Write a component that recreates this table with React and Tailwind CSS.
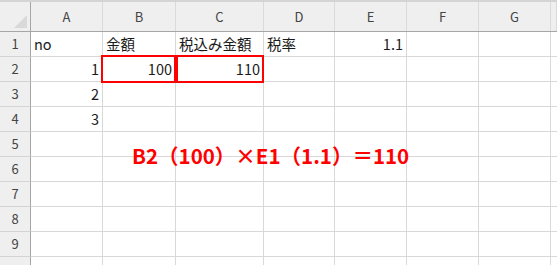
const cols = ['A', 'B', 'C', 'D', 'E', 'F', 'G', ''];
const widths = ['w-[72px]', 'w-[73px]', 'w-[88px]', 'w-[71px]', 'w-[72px]', 'w-[72px]', 'w-[72px]', 'flex-1'];

// cell values per row, [text, align]
const rows = [
  [['no', 'l'], ['金額', 'l'], ['税込み金額', 'l'], ['税率', 'l'], ['1.1', 'r']],
  [['1', 'r'], ['100', 'r'], ['110', 'r']],
  [['2', 'r']],
  [['3', 'r']],
  [],
  [],
  [],
  [],
  [],
  [],
];

const font = { fontFamily: '"Noto Sans CJK JP", "Noto Sans", sans-serif' };

function Corner() {
  return (
    <div className="w-[31px] shrink-0 h-full border-r border-[#a6a6a6] relative">
      <svg className="absolute right-[3px] bottom-[3px]" width="13" height="13" viewBox="0 0 13 13">
        <polygon points="13,0 13,13 0,13" fill="#d9d9d9" />
      </svg>
    </div>
  );
}

function Row({ n, cells }) {
  return (
    <div className="flex h-[25px] shrink-0">
      <div className="w-[31px] shrink-0 bg-[#efefef] border-r border-b border-[#a6a6a6] border-b-[#d4d4d4] flex items-center justify-center text-[13px] text-[#444]">
        {n}
      </div>
      {widths.map((w, i) => {
        const c = cells[i];
        return (
          <div
            key={i}
            className={`${w} shrink-0 border-r border-b border-[#d8d8d8] px-[3px] flex items-center text-[14.5px] text-[#1a1a1a] leading-[24px] whitespace-nowrap ${c && c[1] === 'r' ? 'justify-end' : 'justify-start'}`}
          >
            {c ? c[0] : ''}
          </div>
        );
      })}
    </div>
  );
}

export default function App() {
  return (
    <div className="w-[557px] h-[265px] overflow-hidden bg-white relative flex flex-col" style={font}>
      <div className="h-[2px] bg-[#d4d4d4] shrink-0" />
      <div className="flex h-[30px] shrink-0 bg-[#efefef] border-b border-[#a6a6a6]">
        <Corner />
        {cols.map((c, i) => (
          <div
            key={i}
            className={`${widths[i]} shrink-0 border-r border-[#dadada] flex items-center justify-center text-[13px] text-[#444]`}
          >
            {c}
          </div>
        ))}
      </div>
      {rows.map((r, i) => (
        <Row key={i} n={i < 9 ? i + 1 : ''} cells={r} />
      ))}

      {/* selection outlines on B2 and C2 */}
      <div className="absolute left-[101px] top-[55px] w-[75px] h-[28px] border-2 border-[#ff0000]" />
      <div className="absolute left-[176px] top-[55px] w-[88px] h-[28px] border-2 border-[#ff0000]" />

      {/* formula note */}
      <div className="absolute left-[132px] top-[145px] text-[20.5px] leading-none font-bold text-[#ff0000] whitespace-nowrap">
        B2（100）×E1（1.1）＝110
      </div>
    </div>
  );
}
